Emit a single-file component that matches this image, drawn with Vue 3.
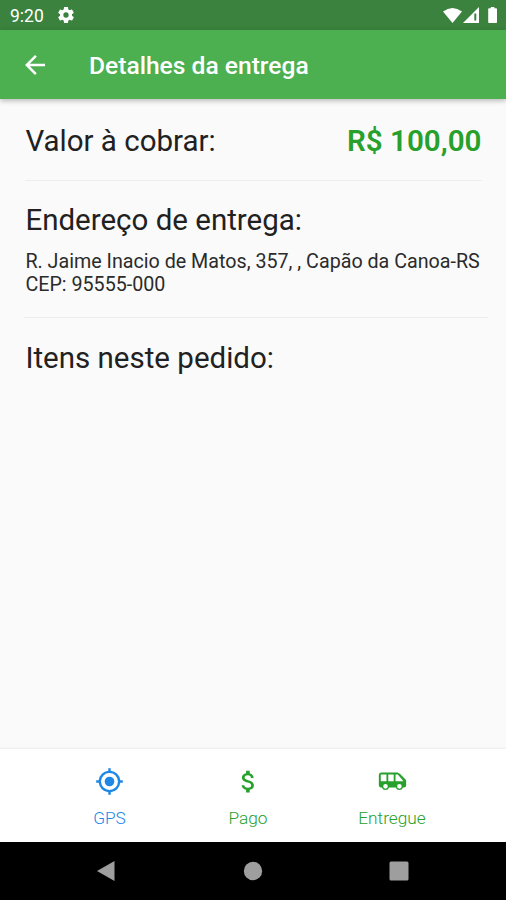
<template>
	<div class="screen">
		<div class="status">
			<span class="status__time">9:20</span>
			<svg class="status__gear" viewBox="0 0 24 24" width="20" height="20">
				<path fill="#fff" d="M19.14 12.94c.04-.3.06-.61.06-.94s-.02-.64-.07-.94l2.03-1.58c.18-.14.23-.41.12-.61l-1.92-3.32c-.12-.22-.37-.29-.59-.22l-2.39.96c-.5-.38-1.03-.7-1.62-.94l-.36-2.54c-.04-.24-.24-.41-.48-.41h-3.84c-.24 0-.43.17-.47.41l-.36 2.54c-.59.24-1.13.57-1.62.94l-2.39-.96c-.22-.08-.47 0-.59.22L2.74 8.87c-.12.21-.08.47.12.61l2.03 1.58c-.05.3-.09.63-.09.94s.02.64.07.94l-2.03 1.58c-.18.14-.23.41-.12.61l1.92 3.32c.12.22.37.29.59.22l2.39-.96c.5.38 1.03.7 1.62.94l.36 2.54c.05.24.24.41.48.41h3.84c.24 0 .44-.17.47-.41l.36-2.54c.59-.24 1.13-.56 1.62-.94l2.39.96c.22.08.47 0 .59-.22l1.92-3.32c.12-.22.07-.47-.12-.61zM12 15.2a3.2 3.2 0 1 1 0-6.4 3.2 3.2 0 0 1 0 6.4z"/>
			</svg>
			<svg class="status__signals" viewBox="0 0 60 20" width="60" height="20">
				<path fill="#fff" d="M3 5.500Q12.500 -1.500 22 5.500L12.500 17z"/>
				<path fill="#fff" fill-rule="evenodd" d="M39 1V17H23zM34.300 7.500V14.500H36.300V7.500z"/>
				<path fill="#fff" d="M49 2.300h1.800V1h3.600v1.300h1.800q.8 0 .8.800v13.100q0 .8-.8.800H49q-.8 0-.8-.8V3.100q0-.8.8-.8z"/>
			</svg>
		</div>
		<header class="bar">
			<button class="bar__back" aria-label="Voltar">
				<svg viewBox="0 0 24 24" width="30" height="30">
					<path fill="#fff" d="M20 11H7.830l5.590-5.590L12 4l-8 8 8 8 1.410-1.410L7.830 13H20v-2z"/>
				</svg>
			</button>
			<h1 class="bar__title">Detalhes da entrega</h1>
		</header>
		<main class="content">
			<section class="block block--price">
				<h2 class="heading">Valor à cobrar:</h2>
				<strong class="price">R$ 100,00</strong>
			</section>
			<section class="block block--address">
				<h2 class="heading">Endereço de entrega:</h2>
				<p class="address">R. Jaime Inacio de Matos, 357, , Capão da Canoa-RS<br>CEP: 95555-000</p>
			</section>
			<section class="block block--items">
				<h2 class="heading">Itens neste pedido:</h2>
			</section>
		</main>
		<footer class="actions">
			<button v-for="action in actions" :key="action.id" class="action" :class="'action--' + action.id">
				<svg viewBox="0 0 24 24" width="29" height="29">
					<path fill="currentColor" fill-rule="evenodd" :d="action.icon"/>
				</svg>
				<span class="action__label">{{ action.label }}</span>
			</button>
		</footer>
		<nav class="nav">
			<svg viewBox="0 0 20 22" width="20" height="22"><path fill="#9e9e9e" d="M1 11 18.500 1v20z"/></svg>
			<svg viewBox="0 0 20 20" width="20" height="20"><circle cx="10" cy="10" r="9.200" fill="#9e9e9e"/></svg>
			<svg viewBox="0 0 20 20" width="20" height="20"><rect x=".5" y=".5" width="19" height="19" rx="1.500" fill="#9e9e9e"/></svg>
		</nav>
	</div>
</template>

<script setup>
const actions = [
	{
		id: 'gps',
		label: 'GPS',
		icon: 'M12 8a4 4 0 1 0 0 8 4 4 0 0 0 0-8zM20.940 11A8.990 8.990 0 0 0 13 3.060V1h-2v2.060A8.990 8.990 0 0 0 3.060 11H1v2h2.060A8.990 8.990 0 0 0 11 20.940V23h2v-2.060A8.990 8.990 0 0 0 20.940 13H23v-2zM12 19a7 7 0 1 1 0-14 7 7 0 0 1 0 14z',
	},
	{
		id: 'pago',
		label: 'Pago',
		icon: 'M11.800 10.900c-2.270-.590-3-1.200-3-2.150 0-1.090 1.010-1.850 2.700-1.850 1.780 0 2.440.850 2.500 2.100h2.210c-.070-1.720-1.120-3.300-3.210-3.810V3h-3v2.160c-1.940.420-3.500 1.680-3.500 3.610 0 2.310 1.910 3.460 4.700 4.130 2.500.6 3 1.480 3 2.410 0 .690-.490 1.790-2.700 1.790-2.060 0-2.870-.920-2.980-2.100h-2.200c.120 2.190 1.760 3.420 3.680 3.830V21h3v-2.150c1.950-.370 3.500-1.500 3.500-3.550 0-2.840-2.430-3.810-4.700-4.400z',
	},
	{
		id: 'entregue',
		label: 'Entregue',
		icon: 'M16.500 4.600H2.800C1.600 4.600.7 5.400.7 6.600v8.600c0 1 .7 1.700 1.700 1.700h.8a3.200 3.200 0 0 0 6 0h5.500a3.200 3.200 0 0 0 6 0h.7c1.100 0 1.900-.8 1.900-1.900v-3.400c0-.5-.2-.9-.5-1.300l-4.700-4.800c-.4-.5-1-.6-1.600-.6zM2.300 11.800V6.200h4.700v5.600H2.300zM6.200 17.900a1.900 1.900 0 1 1 0-3.800 1.900 1.900 0 0 1 0 3.800zM13 11.800H8.500V6.200H13v5.600zM17.700 17.900a1.900 1.900 0 1 1 0-3.800 1.900 1.900 0 0 1 0 3.800zM14.500 11.800V6.200h1.900l4.700 5.600h-6.600z',
	},
]
</script>

<style scoped>
.screen {
	display: flex;
	flex-direction: column;
	width: 506px;
	height: 900px;
	overflow: hidden;
	background-color: #fafafa;
	font-family: Roboto, sans-serif;
	color: #212121;
}

h1, h2, p {
	margin: 0;
	font-weight: 400;
}

svg {
	display: block;
	flex: none;
}

button {
	padding: 0;
	border: 0;
	background: none;
	font: inherit;
	color: inherit;
	cursor: pointer;
}

.status {
	display: flex;
	align-items: center;
	height: 30px;
	padding: 0 6px 0 10px;
	background-color: #3b823e;
	color: #fff;
}

.status__time {
	width: 46px;
	font-size: 17.5px;
	line-height: 30px;
	padding-top: 2px;
	box-sizing: border-box;
}

.status__signals {
	margin-left: auto;
	margin-top: 1px;
}

.bar {
	display: flex;
	align-items: center;
	height: 69px;
	padding-left: 20px;
	background-color: #4caf50;
	color: #fff;
	box-shadow: 0 2px 5px rgba(0, 0, 0, 0.25);
}

.bar__back {
	width: 30px;
	height: 30px;
}

.bar__title {
	margin-left: 39px;
	padding-top: 1px;
	font-size: 24.6px;
	font-weight: 500;
}

.content {
	flex: 1;
	padding: 0 24.5px 0 25.4px;
}

.block {
	box-sizing: border-box;
	border-bottom: 1px solid #ededed;
}

.block--price {
	display: flex;
	justify-content: space-between;
	height: 82px;
	padding-top: 25px;
}

.block--address {
	height: 137px;
	margin: 0 -6px 0 -1px;
	padding: 22px 0 0 1px;
}

.block--items {
	padding-top: 23px;
	border-bottom: 0;
}

.heading {
	font-size: 29.5px;
	line-height: 35px;
}

.price {
	font-size: 29.6px;
	line-height: 35px;
	font-weight: 600;
	color: #27a02c;
}

.address {
	margin-top: 11.5px;
	font-size: 19.7px;
	line-height: 23px;
	white-space: nowrap;
	color: #2b2b2b;
}

.actions {
	display: grid;
	grid-template-columns: 135px 142px 146px;
	height: 93px;
	padding-left: 42px;
	background-color: #fff;
	box-shadow: 0 -1px 2px rgba(0, 0, 0, 0.06);
}

.action {
	display: flex;
	flex-direction: column;
	align-items: center;
	padding-top: 18px;
}

.action--gps {
	color: #1e88e5;
}

.action--pago,
.action--entregue {
	color: #27a02c;
}

.action__label {
	margin-top: 12px;
	font-size: 17.3px;
	font-weight: 300;
	line-height: 20px;
}

.nav {
	display: flex;
	align-items: center;
	justify-content: space-between;
	height: 58px;
	padding: 0 97px 0 96px;
	background-color: #000;
}
</style>
